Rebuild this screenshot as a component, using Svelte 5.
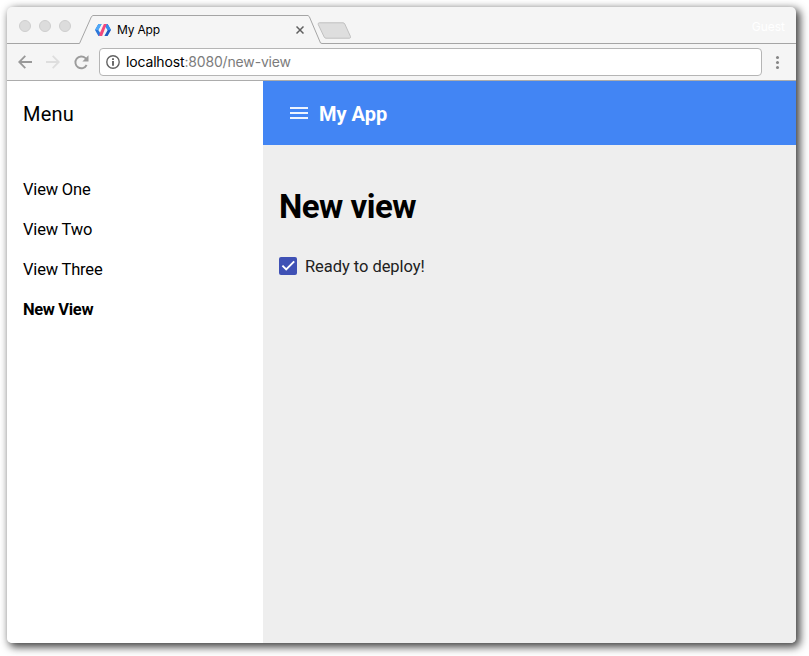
<script>
  let selected = $state('New View');
  const views = ['View One', 'View Two', 'View Three', 'New View'];
  let ready = $state(true);
</script>

<div class="desktop">
  <div class="window">
    <div class="tabstrip">
      <div class="lights"><i></i><i></i><i></i></div>
      <svg class="slope left" width="14" height="30" viewBox="0 0 14 30">
        <path d="M0 28.5h.5L12.5 1.5 14 .5" fill="none" stroke="#a5a5a5" />
      </svg>
      <div class="tab">
        <svg class="logo" width="16" height="14" viewBox="0 0 16 14">
          <path d="M3.4 1H6.6L3.3 7 5.9 11 4.4 13H3.4L0 7z" fill="#2b78dc" />
          <path d="M3.4 1H6.6L3.3 7H0z" fill="#4fa8f7" />
          <path d="M12.6 13H9.4L12.7 7 10.1 3 11.6 1h1L16 7z" fill="#1f5dc2" />
          <path d="M10.1 3L11.6 1h1L16 7h-3.3z" fill="#318ff0" />
          <path d="M8.9 1h2.9L7.1 13H4.2l.7-3z" fill="#f4487c" />
        </svg>
        <span class="tab-title">My App</span>
        <svg class="close" width="8" height="8" viewBox="0 0 8 8">
          <path d="M.5.5l7 7M7.5.5l-7 7" stroke="#606060" stroke-width="1.5" />
        </svg>
      </div>
      <svg class="slope right" width="15" height="30" viewBox="0 0 15 30">
        <path d="M0 .5h1L2.3 1.6 13.5 28 15 28.5" fill="none" stroke="#a5a5a5" />
      </svg>
      <div class="strip-rest">
        <svg class="newtab" width="35" height="18" viewBox="0 0 35 18">
          <path d="M2.2.8H26q1.2 0 1.8 1.2L33.5 14.6q.3 1.5-1 1.6H9q-1.2 0-1.8-1.2L1.2 2.4Q.8 1 2.2.8z" fill="#dedede" stroke="#c0c0c0" />
        </svg>
        <span class="guest">Guest</span>
      </div>
    </div>

    <div class="toolbar">
      <svg class="back" width="14" height="14" viewBox="0 0 14 14">
        <path d="M14 7H1.5M7.3.9L1.2 7l6.1 6.1" fill="none" stroke="#999" stroke-width="1.8" />
      </svg>
      <svg class="forward" width="14" height="14" viewBox="0 0 14 14">
        <path d="M0 7h12.5M6.7.9L12.8 7l-6.1 6.1" fill="none" stroke="#dedede" stroke-width="1.8" />
      </svg>
      <svg class="reload" width="15" height="15" viewBox="0 0 15 15">
        <path d="M12.6 10A5.9 5.9 0 1 1 11.5 3.2L13 4.7" fill="none" stroke="#9c9c9c" stroke-width="1.9" />
        <path d="M14.5.3v6.1H8.4z" fill="#9c9c9c" />
      </svg>
      <div class="omnibox">
        <svg width="14" height="14" viewBox="0 0 14 14">
          <circle cx="7" cy="7" r="6.2" fill="none" stroke="#626262" stroke-width="1.4" />
          <path d="M7 3.2v1.7M7 6.1v4.7" stroke="#505050" stroke-width="1.7" />
        </svg>
        <span class="url">localhost<span>:8080/new-view</span></span>
      </div>
      <div class="dots"><i></i><i></i><i></i></div>
    </div>

    <div class="page">
      <nav>
        <div class="menu-title">Menu</div>
        {#each views as view}
          <button class="link" class:active={view === selected} onclick={() => (selected = view)}>{view}</button>
        {/each}
      </nav>
      <main>
        <header>
          <svg width="18" height="12" viewBox="0 0 18 12">
            <path d="M0 0h18v2H0zM0 5h18v2H0zM0 10h18v2H0z" fill="#fff" opacity=".9" />
          </svg>
          <span class="app-title">My App</span>
        </header>
        <section>
          <h1>New view</h1>
          <button class="check" onclick={() => (ready = !ready)}>
            <span class="box" class:ready>
              {#if ready}
                <svg width="18" height="18" viewBox="0 0 18 18">
                  <path d="M3.4 8.7l3.8 3.8 8-8.1" fill="none" stroke="#fff" stroke-width="1.9" />
                </svg>
              {/if}
            </span>
            <span class="check-label">Ready to deploy!</span>
          </button>
        </section>
      </main>
    </div>
  </div>
</div>

<style>
  :global(body) { background: #fff; }
  .desktop {
    box-sizing: border-box;
    width: 809px;
    height: 656px;
    padding: 7px 13px 13px 7px;
    overflow: hidden;
  }
  .window {
    display: flex;
    flex-direction: column;
    height: 636px;
    border-radius: 5px;
    overflow: hidden;
    background: #f5f5f5;
    box-shadow: 3px 3px 9px 1px rgba(0, 0, 0, .75);
    font-family: Roboto, sans-serif;
  }
  svg { display: block; flex: none; }
  button { border: 0; background: none; padding: 0; font-family: inherit; text-align: left; color: inherit; }

  .tabstrip { display: flex; height: 37px; flex: none; }
  .lights {
    box-sizing: border-box;
    display: flex;
    gap: 8px;
    width: 72px;
    padding: 13px 0 0 12px;
    border-bottom: 1px solid #a5a5a5;
  }
  .lights i { box-sizing: border-box; width: 12px; height: 12px; border-radius: 50%; background: #dcdcdc; border: 1px solid #cecece; }
  .slope { margin-top: 8px; }
  .tab {
    box-sizing: border-box;
    display: flex;
    align-items: center;
    width: 214px;
    height: 29px;
    margin-top: 8px;
    padding-left: 2px;
    border-top: 1px solid #a5a5a5;
  }
  .tab-title { margin-left: 6px; font: 12px/16px Inter, sans-serif; letter-spacing: -.2px; color: #000; }
  .close { margin-left: auto; margin-right: 3px; }
  .strip-rest { box-sizing: border-box; flex: 1; display: flex; border-bottom: 1px solid #a5a5a5; }
  .newtab { margin: 15px 0 0 -5px; }
  .guest { margin: 12px 11px 0 auto; font: 12px/16px Inter, sans-serif; color: #fff; }

  .toolbar {
    box-sizing: border-box;
    display: flex;
    align-items: center;
    height: 37px;
    flex: none;
    padding-left: 11px;
    border-bottom: 1px solid #acacac;
  }
  .forward { margin-left: 14px; }
  .reload { margin-left: 14px; }
  .omnibox {
    box-sizing: border-box;
    display: flex;
    align-items: center;
    width: 663px;
    height: 28px;
    margin-left: 10px;
    padding-left: 6px;
    border: 1px solid #b5b5b5;
    border-radius: 4px;
    background: #fff;
  }
  .url { margin-left: 6px; font: 14px/18px Inter, sans-serif; letter-spacing: -.16px; color: #000; white-space: nowrap; }
  .url span { color: #7c7c7c; }
  .dots { display: flex; flex-direction: column; gap: 2px; margin-left: 14px; }
  .dots i { width: 3px; height: 3px; border-radius: 50%; background: #858585; }

  .page { display: flex; flex: 1; min-height: 0; }
  nav { width: 256px; flex: none; background: #fff; color: #000; }
  .menu-title { height: 64px; margin-bottom: 25px; padding-left: 16px; font-size: 20px; line-height: 66px; letter-spacing: .2px; }
  .link { display: block; width: 100%; padding-left: 16px; font-size: 16.5px; line-height: 40px; letter-spacing: -.18px; }
  .active { font-weight: 700; letter-spacing: -.35px; }
  main { flex: 1; background: #eee; }
  header { display: flex; align-items: center; height: 64px; padding-left: 27px; background: #4285f4; color: #fff; }
  .app-title { margin: 2px 0 0 11px; font-size: 20px; font-weight: 700; }
  section { padding: 42px 16px 0; }
  h1 { margin: 0; font-size: 33px; line-height: 40px; font-weight: 700; letter-spacing: -.5px; color: #000; }
  .check { display: flex; align-items: center; margin-top: 27px; height: 24px; }
  .box { box-sizing: border-box; width: 18px; height: 18px; border: 2px solid #5a5a5a; border-radius: 2px; }
  .ready { border: 0; background: #3f51b5; }
  .check-label { margin: 2px 0 0 8px; font-size: 16.5px; line-height: 24px; letter-spacing: -.05px; color: #212121; }
</style>
